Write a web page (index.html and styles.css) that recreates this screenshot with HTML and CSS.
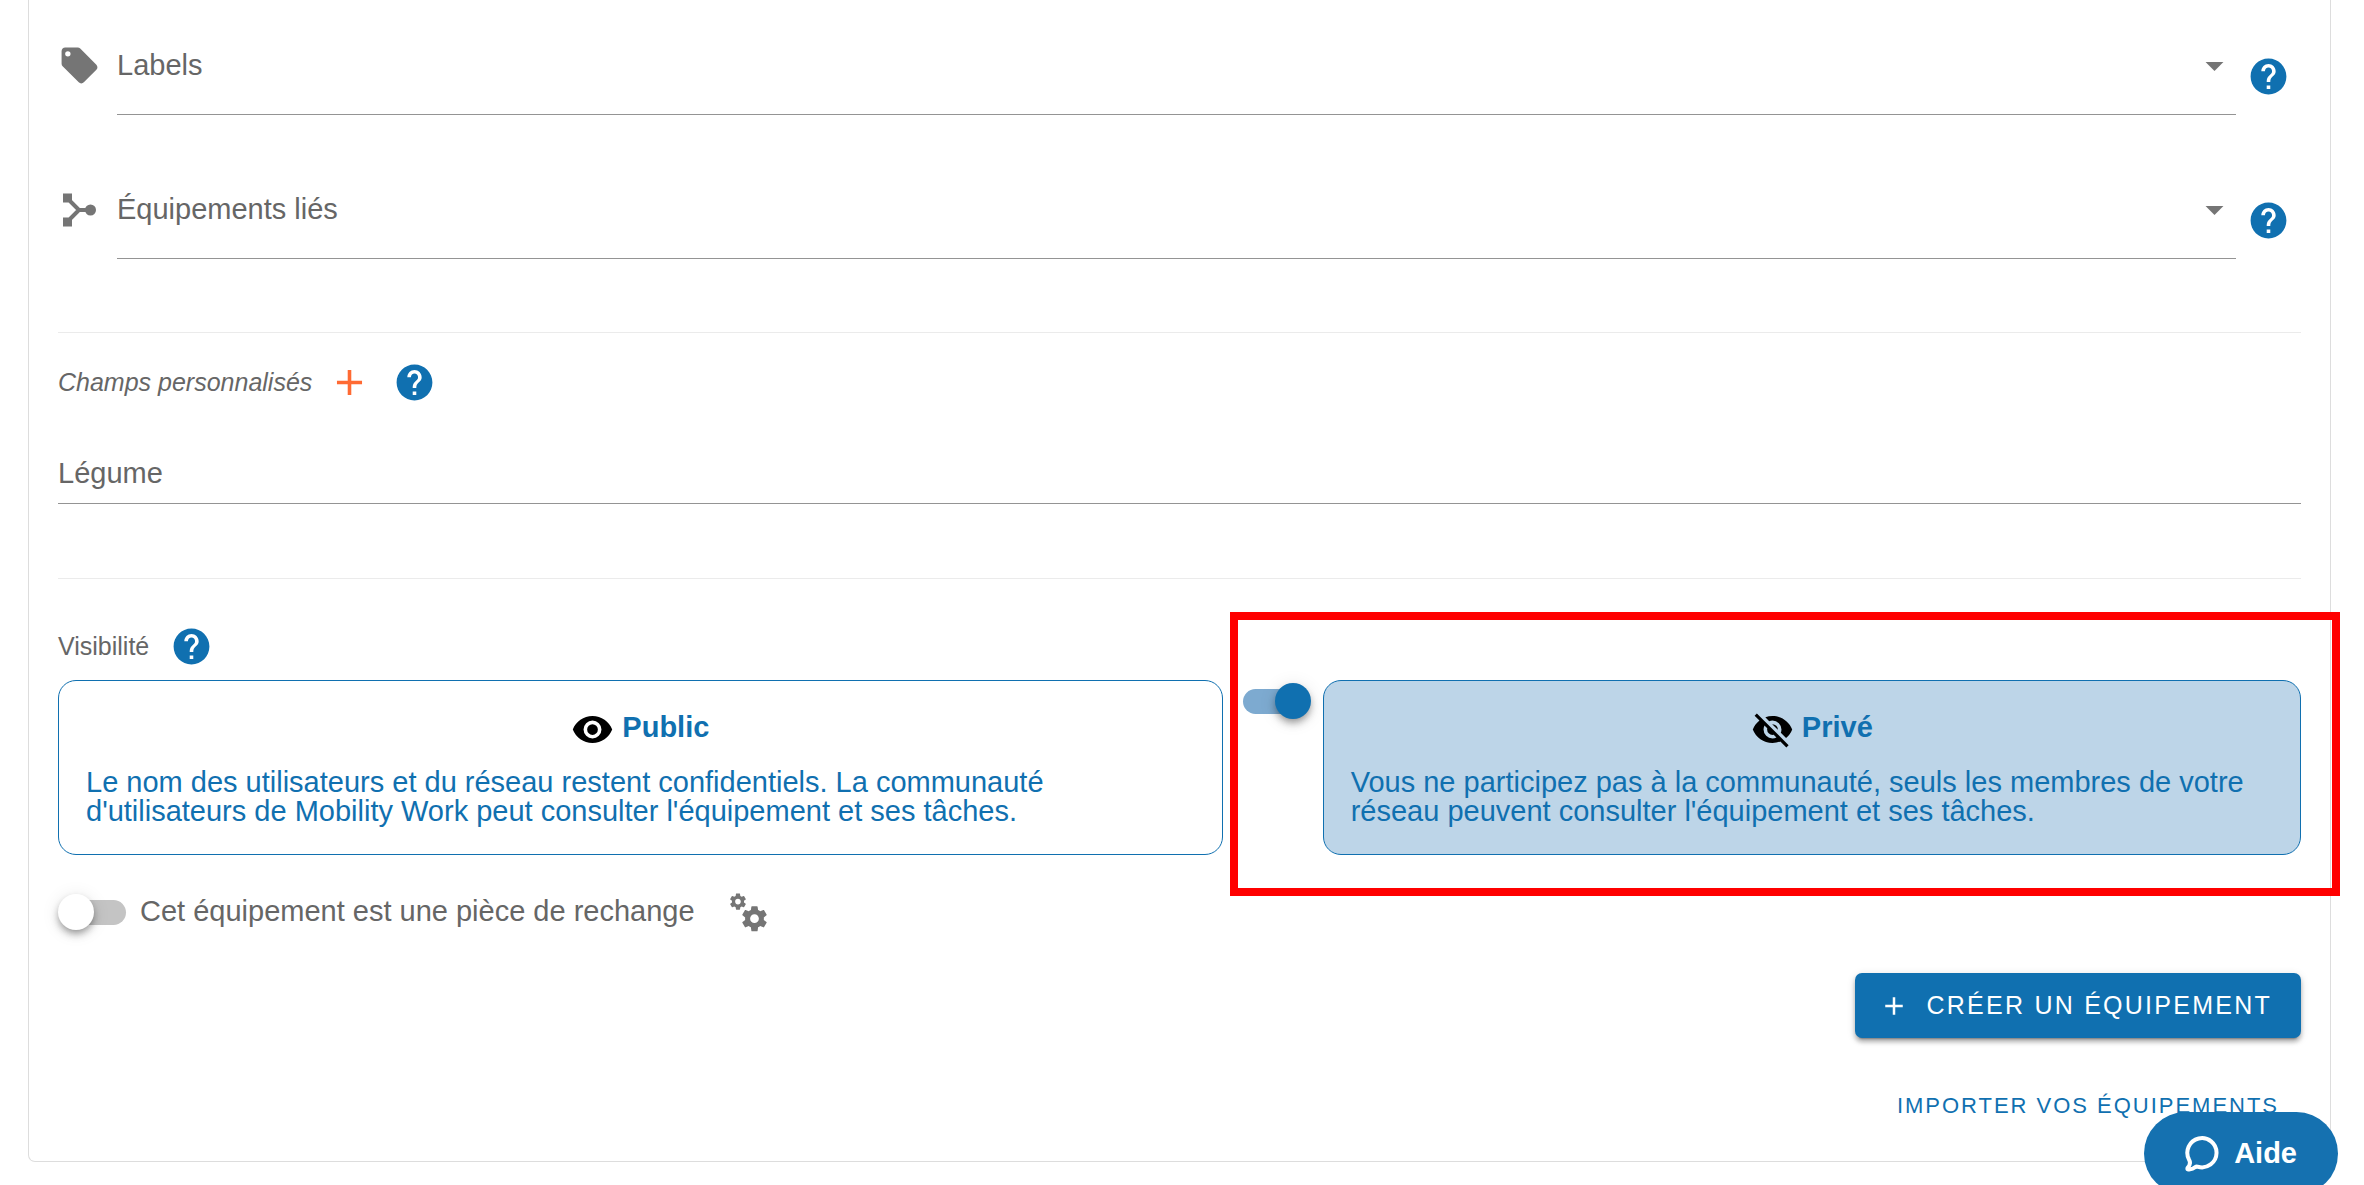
FILE: index.html
```html
<!DOCTYPE html>
<html lang="fr">
<head>
  <meta charset="utf-8">
  <meta name="viewport" content="width=device-width, initial-scale=1">
  <title>Créer un équipement</title>
  <link rel="stylesheet" href="styles.css">
</head>
<body>
  <svg class="sprite" aria-hidden="true">
    <symbol id="help" viewBox="0 0 24 24"><path d="M12 2C6.480 2 2 6.480 2 12s4.480 10 10 10 10-4.480 10-10S17.520 2 12 2zm1 17h-2v-2h2v2zm2.070-7.750l-.9.920C13.450 12.900 13 13.500 13 15h-2v-.5c0-1.100.45-2.100 1.170-2.830l1.240-1.260c.37-.36.59-.86.59-1.410 0-1.100-.9-2-2-2s-2 .9-2 2H8c0-2.210 1.790-4 4-4s4 1.790 4 4c0 .88-.36 1.680-.93 2.250z"/></symbol>
    <symbol id="plus" viewBox="0 0 24 24"><path d="M19 13h-6v6h-2v-6H5v-2h6V5h2v6h6z"/></symbol>
    <symbol id="caret" viewBox="0 0 24 24"><path d="M7 10l5 5 5-5z"/></symbol>
  </svg>

  <main class="page">
    <form class="card">
      <div class="field-row">
        <svg class="icon" viewBox="0 0 24 24" aria-hidden="true"><path d="M5.500 7A1.500 1.500 0 0 1 4 5.500 1.500 1.500 0 0 1 5.500 4 1.500 1.500 0 0 1 7 5.500 1.500 1.500 0 0 1 5.500 7m15.910 4.580l-9-9C12.050 2.220 11.550 2 11 2H4c-1.110 0-2 .89-2 2v7c0 .55.22 1.050.59 1.410l8.990 9c.37.36.87.59 1.420.59s1.050-.23 1.410-.59l7-7c.37-.36.59-.86.59-1.410 0-.56-.23-1.060-.59-1.420z"/></svg>
        <div class="field">
          <label for="labels">Labels</label>
          <select id="labels"><option value=""></option></select>
          <svg class="icon caret" aria-hidden="true"><use href="#caret"/></svg>
        </div>
        <button type="button" class="icon-button help low" aria-label="Aide sur les labels"><svg class="icon"><use href="#help"/></svg></button>
      </div>

      <div class="field-row">
        <svg class="icon" viewBox="0 0 43 43" aria-hidden="true"><path d="M5 5.500h9v9H5zM5 29.500h9v9H5z"/><circle cx="32.500" cy="22" r="5.500"/><path class="link-line" d="M12 13l9 9-9 9M20 22h12"/></svg>
        <div class="field">
          <label for="linked">Équipements liés</label>
          <select id="linked"><option value=""></option></select>
          <svg class="icon caret" aria-hidden="true"><use href="#caret"/></svg>
        </div>
        <button type="button" class="icon-button help low" aria-label="Aide sur les équipements liés"><svg class="icon"><use href="#help"/></svg></button>
      </div>

      <hr>

      <div class="custom-head">
        <em>Champs personnalisés</em>
        <button type="button" class="icon-button add" aria-label="Ajouter un champ"><svg class="icon"><use href="#plus"/></svg></button>
        <button type="button" class="icon-button help" aria-label="Aide sur les champs personnalisés"><svg class="icon"><use href="#help"/></svg></button>
      </div>

      <div class="field field-text">
        <label for="legume">Légume</label>
        <input id="legume" type="text">
      </div>

      <hr>

      <div class="visibility-head">
        <span id="visibility">Visibilité</span>
        <button type="button" class="icon-button help" aria-label="Aide sur la visibilité"><svg class="icon"><use href="#help"/></svg></button>
      </div>

      <div class="visibility">
        <section class="option">
          <h2><svg class="icon" viewBox="0 0 24 24" aria-hidden="true"><path d="M12 9a3 3 0 0 0-3 3 3 3 0 0 0 3 3 3 3 0 0 0 3-3 3 3 0 0 0-3-3m0 8a5 5 0 0 1-5-5 5 5 0 0 1 5-5 5 5 0 0 1 5 5 5 5 0 0 1-5 5m0-12.500C7 4.500 2.730 7.610 1 12c1.730 4.390 6 7.500 11 7.500s9.270-3.110 11-7.500c-1.730-4.390-6-7.500-11-7.500z"/></svg>Public</h2>
          <p>Le nom des utilisateurs et du réseau restent confidentiels. La communauté d'utilisateurs de Mobility Work peut consulter l'équipement et ses tâches.</p>
        </section>
        <input class="switch" type="checkbox" role="switch" aria-labelledby="visibility" checked>
        <section class="option selected">
          <h2><svg class="icon" viewBox="0 0 24 24" aria-hidden="true"><path d="M11.830 9L15 12.160V12a3 3 0 0 0-3-3h-.17m-4.300.8l1.550 1.550c-.05.21-.08.42-.08.65a3 3 0 0 0 3 3c.22 0 .44-.03.65-.08l1.550 1.550c-.67.33-1.410.53-2.200.53a5 5 0 0 1-5-5c0-.79.2-1.530.53-2.200M2 4.270l2.280 2.280.45.45C3.080 8.300 1.780 10 1 12c1.730 4.390 6 7.500 11 7.500 1.550 0 3.030-.3 4.380-.84l.43.42L19.730 22 21 20.730 3.270 3M12 7a5 5 0 0 1 5 5c0 .64-.13 1.260-.36 1.820l2.930 2.930c1.500-1.250 2.700-2.890 3.430-4.750-1.730-4.390-6-7.500-11-7.500-1.400 0-2.740.25-4 .7l2.170 2.150C10.740 7.130 11.350 7 12 7z"/></svg>Privé</h2>
          <p>Vous ne participez pas à la communauté, seuls les membres de votre réseau peuvent consulter l'équipement et ses tâches.</p>
        </section>
        <div class="highlight" aria-hidden="true"></div>
      </div>

      <div class="spare">
        <label class="spare-label"><input class="switch" type="checkbox" role="switch">Cet équipement est une pièce de rechange</label>
        <svg class="icon" viewBox="0 0 24 24" aria-hidden="true"><path d="M15.900,18.450C17.250,18.450 18.350,17.350 18.350,16C18.350,14.650 17.250,13.550 15.900,13.550C14.540,13.550 13.450,14.650 13.450,16C13.450,17.350 14.540,18.450 15.900,18.450M21.100,16.680L22.580,17.840C22.710,17.950 22.750,18.130 22.660,18.290L21.260,20.710C21.170,20.860 21,20.920 20.830,20.860L19.090,20.160C18.730,20.440 18.330,20.670 17.910,20.850L17.640,22.700C17.620,22.870 17.470,23 17.300,23H14.500C14.320,23 14.180,22.870 14.150,22.700L13.890,20.850C13.460,20.670 13.070,20.440 12.710,20.160L10.960,20.860C10.810,20.920 10.620,20.860 10.540,20.710L9.140,18.290C9.050,18.130 9.090,17.950 9.220,17.840L10.700,16.680L10.650,16L10.700,15.310L9.220,14.160C9.090,14.050 9.050,13.860 9.140,13.710L10.540,11.290C10.620,11.130 10.810,11.070 10.960,11.130L12.710,11.840C13.070,11.560 13.460,11.320 13.890,11.150L14.150,9.290C14.180,9.130 14.320,9 14.500,9H17.300C17.470,9 17.620,9.130 17.640,9.290L17.910,11.150C18.330,11.320 18.730,11.560 19.090,11.840L20.830,11.130C21,11.070 21.170,11.130 21.260,11.290L22.660,13.710C22.750,13.860 22.710,14.050 22.580,14.160L21.100,15.310L21.150,16L21.100,16.680M6.690,8.070C7.560,8.070 8.260,7.370 8.260,6.500C8.260,5.630 7.560,4.920 6.690,4.920A1.580,1.580 0 0,0 5.110,6.500C5.110,7.370 5.820,8.070 6.690,8.070M10.030,6.940L11,7.680C11.070,7.750 11.090,7.870 11.030,7.970L10.130,9.530C10.080,9.630 9.960,9.670 9.860,9.630L8.740,9.180L8,9.620L7.810,10.810C7.790,10.920 7.700,11 7.590,11H5.790C5.670,11 5.580,10.920 5.560,10.810L5.400,9.620L4.640,9.180L3.520,9.630C3.410,9.670 3.300,9.630 3.240,9.530L2.340,7.970C2.280,7.870 2.310,7.750 2.390,7.680L3.340,6.940L3.310,6.500L3.340,6.060L2.390,5.320C2.310,5.250 2.280,5.130 2.340,5.030L3.240,3.470C3.300,3.370 3.410,3.330 3.520,3.370L4.630,3.820L5.400,3.380L5.560,2.190C5.580,2.080 5.670,2 5.790,2H7.590C7.700,2 7.790,2.080 7.810,2.190L8,3.380L8.740,3.820L9.860,3.370C9.960,3.330 10.080,3.370 10.130,3.470L11.030,5.030C11.090,5.130 11.070,5.250 11,5.320L10.030,6.060L10.060,6.500L10.030,6.940Z"/></svg>
      </div>

      <div class="actions">
        <button type="submit" class="primary"><svg aria-hidden="true"><use href="#plus"/></svg>Créer un équipement</button>
        <a class="import" href="#import">Importer vos équipements</a>
      </div>
    </form>
  </main>

  <button type="button" class="help-widget">
    <svg viewBox="0 0 36 38" aria-hidden="true"><path d="M14 31.800A14.600 14.600 0 1 0 5 24.500Q7.500 29 3.500 33Q3 35 5 34.500Q9 34 11 32.200Q12.500 31.300 14 31.800z"/></svg>
    Aide
  </button>
</body>
</html>
```
FILE: styles.css
```css
:root {
  --blue: #1070b0;
  --text: #666;
  --icon: #757575;
  --line: #949494;
  --size: 29px;
  --size-small: 25px;
}

* {
  box-sizing: border-box;
}

body {
  margin: 0;
  background: #fff;
  color: var(--text);
  font-family: Helvetica, "Liberation Sans", Arial, sans-serif;
  font-size: var(--size);
  line-height: 43px;
}

button,
input,
select {
  font: inherit;
  color: inherit;
}

.sprite {
  position: absolute;
  width: 0;
  height: 0;
}

.page {
  padding: 0 33px 23px 28px;
}

.card {
  padding: 44px 29px 30px;
  border: 1px solid #ddd;
  border-top: 0;
  border-radius: 0 0 7px 7px;
}

.icon {
  flex: none;
  display: block;
  width: 43px;
  height: 43px;
  fill: var(--icon);
}

.link-line {
  fill: none;
  stroke: var(--icon);
  stroke-width: 4;
}

.icon-button {
  flex: none;
  padding: 0;
  border: 0;
  background: none;
  cursor: pointer;
}

.help .icon {
  fill: var(--blue);
}

.add .icon {
  fill: #ff6a33;
}

.low {
  margin: 11px 11px 0 0;
}

.field-row {
  display: flex;
  align-items: flex-start;
  margin-bottom: 73px;
}

.field-row .field {
  flex: 1;
  margin: 0 11px 0 16px;
  padding-bottom: 27px;
}

/* The label lies in the same cell as its control. */
.field {
  display: grid;
  border-bottom: 1px solid var(--line);
}

.field > * {
  grid-area: 1 / 1;
}

.field label,
.field .caret {
  pointer-events: none;
}

.field .caret {
  justify-self: end;
}

.field input,
.field select {
  width: 100%;
  height: 43px;
  padding: 0;
  border: 0;
  outline: 0;
  background: none;
  appearance: none;
}

hr {
  height: 1px;
  margin: 0;
  border: 0;
  background: #ebebeb;
}

.custom-head,
.visibility-head {
  display: flex;
  align-items: center;
  font-size: var(--size-small);
}

.custom-head {
  margin: 28px 0 48px;
}

.custom-head .add {
  margin: 0 22px 0 16px;
}

.field-text {
  margin-bottom: 74px;
  padding-bottom: 8px;
}

.visibility-head {
  gap: 21px;
  margin: 46px 0 12px;
}

.visibility {
  position: relative;
  display: grid;
  grid-template-columns: 25fr 100px 21fr;
}

.option {
  padding: 27px 27px 28px;
  border: 1px solid var(--blue);
  border-radius: 18px;
  color: var(--blue);
}

.option.selected {
  background: #bdd5e8;
}

.option h2 {
  display: flex;
  justify-content: center;
  gap: 8px;
  margin: 0 0 17px;
  font-size: var(--size);
  line-height: 39px;
}

.option h2 .icon {
  fill: #000;
}

.option p {
  margin: 0;
  line-height: 29px;
}

.switch {
  position: relative;
  flex: none;
  width: 68px;
  height: 36px;
  margin: 0;
  appearance: none;
  cursor: pointer;
}

.visibility .switch {
  margin: 3px 0 0 20px;
}

.switch::before,
.switch::after {
  content: "";
  position: absolute;
}

.switch::before {
  inset: 6px 0 5px 3px;
  border-radius: 13px;
  background: #c4c4c4;
}

.switch::after {
  top: 0;
  left: 0;
  width: 36px;
  height: 36px;
  border-radius: 50%;
  background: #fff;
  box-shadow: 0 4px 7px -2px rgba(0, 0, 0, .3), 0 5px 9px rgba(0, 0, 0, .16), 0 2px 18px rgba(0, 0, 0, .1);
}

.switch:checked::before {
  inset: 6px 3px 5px 0;
  background: #7daad0;
}

.switch:checked::after {
  left: 32px;
  background: var(--blue);
}

/* Frame drawn over the page around the private option. */
.highlight {
  position: absolute;
  grid-column: 2 / 4;
  inset: -68px -39px -41px 7px;
  border: 8px solid #f00;
  pointer-events: none;
}

.spare {
  display: flex;
  align-items: center;
  gap: 31px;
  margin: 35px 0 40px;
}

.spare-label {
  display: flex;
  align-items: center;
  gap: 14px;
}

.actions {
  display: flex;
  flex-direction: column;
  align-items: flex-end;
  gap: 43px;
}

.primary,
.import {
  letter-spacing: .09em;
  text-transform: uppercase;
}

.primary {
  display: flex;
  align-items: center;
  gap: 17px;
  height: 65px;
  padding: 0 29px 0 24px;
  border: 0;
  border-radius: 7px;
  background: var(--blue);
  box-shadow: 0 5px 2px -4px rgba(0, 0, 0, .3), 0 4px 4px rgba(0, 0, 0, .24), 0 2px 9px rgba(0, 0, 0, .14);
  color: #fff;
  font-size: var(--size-small);
  cursor: pointer;
}

.primary svg {
  width: 30px;
  height: 30px;
  fill: currentColor;
}

.import {
  padding: 4px 22px;
  color: var(--blue);
  font-size: 22px;
  line-height: 42px;
  text-decoration: none;
}

.help-widget {
  position: fixed;
  right: 26px;
  bottom: -10px;
  display: flex;
  align-items: center;
  gap: 14px;
  height: 83px;
  padding: 0 41px 0 40px;
  border: 0;
  border-radius: 42px;
  background: #1571b0;
  color: #fff;
  font-size: 29px;
  font-weight: 700;
  cursor: pointer;
}

.help-widget svg {
  width: 36px;
  height: 38px;
  fill: none;
  stroke: currentColor;
  stroke-width: 4;
  stroke-linejoin: round;
}
```
